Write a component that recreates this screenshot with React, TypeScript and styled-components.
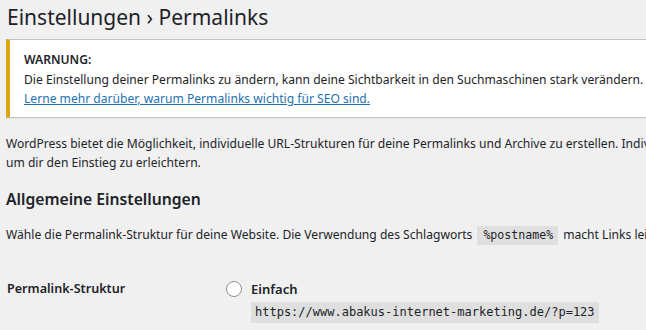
import { createGlobalStyle } from 'styled-components'
import styled from 'styled-components'

const GlobalStyle = createGlobalStyle`
  html, body {
    margin: 0;
    overflow: hidden;
    background: #f0f0f1;
  }
  body {
    color: #1d2327;
    font-family: 'Noto Sans', 'Open Sans', sans-serif;
    font-size: 12.1px;
    line-height: 19.5px;
  }
`

const Wrap = styled.div`
  width: 1100px;
  padding: 0 0 0 6px;
  white-space: nowrap;
`

const Title = styled.h1`
  margin: 0;
  padding: 2px 0 0 1px;
  height: 37px;
  font-size: 21px;
  font-weight: 400;
  line-height: 30px;
`

const Notice = styled.div`
  background: #fff;
  border: 1px solid #c3c4c7;
  border-left: 4px solid #dba617;
  box-shadow: 0 1px 1px rgba(0, 0, 0, 0.04);
  padding: 10px 14px 8px;
`

const NoticeLine = styled.p<{ $strong?: boolean }>`
  margin: 0;
  font-weight: ${(p) => (p.$strong ? 600 : 400)};
`

const Link = styled.a`
  color: #2271b1;
  text-decoration: underline;
`

const Text = styled.p<{ $top?: number }>`
  margin: ${(p) => p.$top ?? 0}px 0 0 0;
`

const SectionTitle = styled.h2`
  margin: 14px 0 0 0;
  font-size: 15.7px;
  font-weight: 600;
  line-height: 24px;
`

const Code = styled.code`
  font-family: 'DejaVu Sans Mono', 'Liberation Mono', monospace;
  font-size: 11.6px;
  background: rgba(0, 0, 0, 0.07);
  padding: 2px 5px 3px 6px;
  margin: 0 5px;
`

const FormRow = styled.div`
  display: grid;
  grid-template-columns: 220px 1fr;
  margin-top: 31px;
`

const Label = styled.div`
  font-size: 12.6px;
  font-weight: 600;
  padding: 1px 0 0 1px;
  line-height: 24px;
`

const Option = styled.label`
  display: flex;
  align-items: center;
  gap: 9px;
  font-size: 13px;
  font-weight: 600;
  line-height: 24px;
  padding-top: 1px;
`

const Radio = styled.span`
  width: 16px;
  height: 16px;
  box-sizing: border-box;
  border: 1px solid #8c8f94;
  border-radius: 50%;
  background: #fff;
`

const UrlCode = styled.code`
  display: inline-block;
  margin: 1px 0 0 25px;
  font-family: 'DejaVu Sans Mono', 'Liberation Mono', monospace;
  font-size: 12px;
  line-height: 21px;
  background: rgba(0, 0, 0, 0.07);
  padding: 0 4px 0 4px;
`

export default function App() {
  return (
    <>
      <GlobalStyle />
      <Wrap>
        <Title>Einstellungen › Permalinks</Title>
        <Notice>
          <NoticeLine $strong>WARNUNG:</NoticeLine>
          <NoticeLine>
            Die Einstellung deiner Permalinks zu ändern, kann deine Sichtbarkeit in den Suchmaschinen stark
            verändern.
          </NoticeLine>
          <NoticeLine>
            <Link href="#">Lerne mehr darüber, warum Permalinks wichtig für SEO sind.</Link>
          </NoticeLine>
        </Notice>
        <Text $top={16}>
          WordPress bietet die Möglichkeit, individuelle URL-Strukturen für deine Permalinks und Archive zu
          erstellen. Individuelle URL-Strukturen können die Ästhetik, Benutzerfreundlichkeit
          <br />
          um dir den Einstieg zu erleichtern.
        </Text>
        <SectionTitle>Allgemeine Einstellungen</SectionTitle>
        <Text $top={14}>
          Wähle die Permalink-Struktur für deine Website. Die Verwendung des Schlagworts
          <Code>%postname%</Code>
          macht Links leichter verständlich.
        </Text>
        <FormRow>
          <Label>Permalink-Struktur</Label>
          <div>
            <Option>
              <Radio />
              Einfach
            </Option>
            <UrlCode>https://www.abakus-internet-marketing.de/?p=123</UrlCode>
          </div>
        </FormRow>
      </Wrap>
    </>
  )
}
